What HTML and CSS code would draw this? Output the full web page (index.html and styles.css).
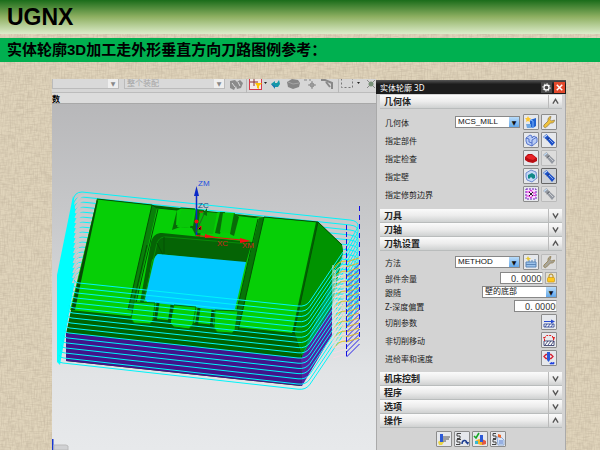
FILE: index.html
```html
<!DOCTYPE html>
<html lang="zh-CN">
<head>
    <meta charset="UTF-8">
    <meta name="viewport" content="width=device-width, initial-scale=1.0">
    <title>UGNX</title>
    <link rel="stylesheet" href="styles.css">
</head>
<body>
    <!-- linen texture behind the slide -->
    <svg class="linen" aria-hidden="true">
        <filter id="weft" x="0" y="0" width="100%" height="100%">
            <feTurbulence type="fractalNoise" baseFrequency="0.12 0.7" numOctaves="2" seed="4"/>
            <feColorMatrix values="0 0 0 0 0.55  0 0 0 0 0.47  0 0 0 0 0.35  1.3 0 0 0 -0.52"/>
        </filter>
        <filter id="warp" x="0" y="0" width="100%" height="100%">
            <feTurbulence type="fractalNoise" baseFrequency="0.7 0.12" numOctaves="2" seed="9"/>
            <feColorMatrix values="0 0 0 0 0.55  0 0 0 0 0.47  0 0 0 0 0.35  1.3 0 0 0 -0.52"/>
        </filter>
        <rect width="100%" height="100%" filter="url(#weft)"/>
        <rect width="100%" height="100%" filter="url(#warp)"/>
    </svg>

    <!-- shared icons -->
    <svg class="sprite" aria-hidden="true">
        <symbol id="torch" viewBox="0 0 14 14">
            <path d="M1 4 4.500 1 7 4l6 5.500-3 3.500-5.500-6.500z" fill="currentColor"/>
            <path d="M2 4.500 5 2" stroke="#c4dcf4" stroke-width="1.200"/>
            <path d="M7.500 4.500 4.500 7" stroke="#222" stroke-opacity=".6" stroke-width=".8"/>
            <path d="M7 6l4 4" stroke="#fff" stroke-opacity=".5"/>
        </symbol>
        <symbol id="wrench" viewBox="0 0 14 14">
            <path d="M9 1.500 8 4.500 9.500 6l3-1c0 2-1.500 3.500-4 3L4.500 12a1.500 1.500 0 0 1-2.500-2l4-4C5.500 3.500 7 1.500 9 1.500z" fill="currentColor" stroke="#8a7440" stroke-width=".7"/>
        </symbol>
        <symbol id="down" viewBox="0 0 8 8"><path d="M1 1.500 4 6.500l3-5" fill="none" stroke="#555" stroke-width="1.500"/></symbol>
        <symbol id="up" viewBox="0 0 8 8"><path d="M1 6.500 4 1.500l3 5" fill="none" stroke="#555" stroke-width="1.500"/></symbol>
    </svg>

    <header class="banner"><h1>UGNX</h1></header>
    <h2 class="subtitle">实体轮廓3D加工走外形垂直方向刀路图例参考：</h2>

    <main class="stage">
        <section class="workspace">
            <div class="toolbar">
                <span class="combo combo-filter"><select aria-label="过滤器" disabled><option></option></select></span>
                <span class="combo combo-scope"><select aria-label="范围" disabled><option>整个装配</option></select></span>
                <svg class="tools" viewBox="230 79 146 14" preserveAspectRatio="xMinYMin slice" aria-hidden="true">
                    <path d="M230 81l5-1 2 2 3-2 3 3-2 5-4 1-1-3-2 4-4-2z" fill="#8b8b8b"/>
                    <path d="M232 83l3 4m3-5 2 4" stroke="#ddd"/>
                    <path d="M246.500 79v14M338.500 79v14" stroke="#b8b8b8"/>
                    <rect x="249.500" y="77.500" width="12" height="12" fill="#f2e8e8" stroke="#d43a4a"/>
                    <path d="M250 82h8m-4-3v7" stroke="#843030"/>
                    <path d="M255 83h7l-3 3v3l-2-1v-2z" fill="#ffc400"/>
                    <path d="M264 82h3l-1.500 2z" fill="#222"/>
                    <path d="M271 84l4-3v2h2l2-3 1 4-2 3h-3v2z" fill="#1598a8"/>
                    <path d="M271 84l4 2v2z" fill="#2266b8"/>
                    <path d="M287 82l5-3 6 1 2 3-1 4-6 2-5-2z" fill="#858585"/>
                    <path d="M288 82l5 2 6-1" stroke="#a5a5a5" fill="none"/>
                    <path d="M304 80h3m3-1v2M308 85h8m-4-4v8" stroke="#888"/>
                    <circle cx="312" cy="85" r="2" fill="none" stroke="#888"/>
                    <path d="M321 80h4l7 3v6m-6-7 4 5" stroke="#888" stroke-width="2" fill="none"/>
                    <rect x="341.500" y="76.500" width="11" height="11" fill="none" stroke="#777" stroke-dasharray="2 2"/>
                    <path d="M357 82h3l-1.500 2z" fill="#222"/>
                    <path d="M367 80l8 8m0-8-8 8" stroke="#888"/><circle cx="371" cy="84" r="2.500" fill="#789078"/>
                </svg>
            </div>
            <div class="cue">数</div>

            <svg class="model" viewBox="52 104 324 346" preserveAspectRatio="xMinYMin slice" role="img" aria-label="刀路">
                <g id="back" class="pass"></g>
                <path d="M73 196 57 275v87l3 3 15-85 1-65z" fill="#00ffff"/>
                <g id="left" class="gap"></g>

                <!-- block -->
                <path d="M97 199 71 310l-5 24v27l234 25 32-52v-28l11-54-1-7-24-23-54-5z" fill="#006400"/>
                <path d="M97 199l55 6 5 3 20 2 4-2 14 1 4 3 17 1 4-1 14 1 4 3 17 2 5-1 56 5-24 111-67-7-155-16z" fill="#06cf06"/>
                <path d="M97 199 71 310h4l23-109z" fill="#064a06"/>
                <path d="M318 222l24 23 1 7-42 106-7-25z" fill="#009300"/>
                <path d="M343 252 301 358l31-51z" fill="#00a050"/>
                <path d="M66 333l235 25 1 28-236-25z" fill="#41148a"/>
                <path d="M301 358l31-51v28l-30 51z" fill="#5520a0"/>

                <!-- channels -->
                <path d="M152 205l5 3-24 103-5-1z" fill="#098009"/>
                <path d="M152 205l-24 105M158 209l-24 102M147 245l-13 55" class="seam"/>
                <path d="M259 218l5-1-26 114-6-1z" fill="#077507"/>
                <path d="M258 219l-26 112M264 217l-26 114" class="seam"/>

                <!-- pocket -->
                <path d="M151 242c2-7 6-9 11-9l90 9-6 21-88-9-6 6-7 40-6 8z" fill="#056405"/>
                <path d="M144 300 157 243c2-5 5-6 9-6l84 7" fill="none" stroke="#088c08"/>
                <path d="M164 237v17M157 243l6 12" class="seam"/>
                <path d="M158 254c-2 1-3 3-4 6l-9 39 2 3 80 9 8-2 11-47z" fill="#00c8ff"/>

                <!-- lugs above the opening -->
                <path d="M177 210 172 230l8-3 12 1 4 8 4 1 4-27-8-1-3 17-17-1z" fill="#086c08"/>
                <path d="M182 208l12 1-4 19-13-1z" fill="#08c808"/>
                <path d="M200 212l17 1-4 21-16-1z" fill="#08b808"/>
                <path d="M220 212l5 0-5 22-5-1z" fill="#086c08"/>
                <path d="M223 213l10 1-3 19-10-1z" fill="#08c808"/>
                <path d="M234 213l5 4-5 19-4-2z" fill="#086c08"/>

                <!-- lugs below the opening -->
                <g fill="#06cf06" stroke="#067006">
                    <path d="M134 302l21 1-2 17-3 4-16-1-3-4z"/>
                    <path d="M174 305l22 2-3 17-4 5-15-2-4-4z"/>
                    <path d="M215 310l23 1-3 19-3 3-15-1-3-4z"/>
                </g>
                <path d="M158 303l-3 19m17-17-3 19m30-16-3 20m17-18-2 20" stroke="#045404" stroke-width="3"/>
                <path d="M97 199l55 6 5 3 20 2 4-2 14 1M264 217l54 5 24 23M318 222l-24 110 8 26" class="seam"/>

                <g id="front" class="pass"></g>

                <!-- approach and retract moves -->
                <g id="entry" class="entry"></g>
                <path d="M346.500 225v132" stroke="#1410e0" stroke-dasharray="5 2"/>
                <path d="M359.500 206v135" stroke="#1410e0" stroke-dasharray="5 4"/>

                <!-- axes -->
                <path d="M196.500 235v-42" stroke="#0a28c8" stroke-width="1.500"/>
                <path d="M194 196l2.500-10 2.500 10z" fill="#0a28c8"/>
                <path d="M196 235.500l50 5" stroke="#f01010"/>
                <path d="M205 234l10 3-10 1zM240 238l11 3-11 2z" fill="#f01010"/>
                <path d="M196 232l9-20" stroke="#226622"/>
                <path d="M207 208l-4 6 4 2z" fill="#087008"/>
                <circle cx="196.500" cy="221.500" r="2" fill="#f01010"/>
                <path d="M198 229l3-3v4M199 212h4" stroke="#f01010"/>
                <text x="198" y="186" fill="#2450e0">ZM</text>
                <text x="198" y="208" fill="#164a80">ZC</text>
                <text x="217" y="246" fill="#d02020">XC</text>
                <text x="242" y="248" fill="#d02020">XM</text>
                <path d="M52.500 439v11" stroke="#1838d0" stroke-width="2"/>
                <path d="M54 445h12l2 1v4H54z" fill="#d0d1d3" stroke="#bbb"/>
            </svg>
        </section>

        <form class="dialog">
            <div class="titlebar">
                <span>实体轮廓 3D</span>
                <button type="button" class="tb gear" aria-label="设置">
                    <svg viewBox="0 0 10 10"><circle cx="5" cy="5" r="2.300" fill="none" stroke="#fff" stroke-width="1.200"/><circle cx="5" cy="5" r="3.400" fill="none" stroke="#fff" stroke-width=".8" stroke-dasharray="1.300 1.300"/></svg>
                </button>
                <button type="button" class="tb close" aria-label="关闭">
                    <svg viewBox="0 0 10 10"><path d="M2.500 2.500l5 5M7.500 2.500l-5 5" stroke="#fff" stroke-width="1.400"/></svg>
                </button>
            </div>

            <button type="button" class="group" aria-expanded="true"><span>几何体</span><svg><use href="#up"/></svg></button>
            <div class="panel panel-geometry">
                <div class="row">
                    <label for="geometry">几何体</label>
                    <span class="combo combo-blue"><select id="geometry"><option>MCS_MILL</option></select></span>
                    <button type="button" class="icon" aria-label="新建几何体">
                        <svg viewBox="0 0 14 14"><path d="M6 5l6-2v8l-3 2-3-1z" fill="#1f62d0"/><path d="M6 5l3 1v7" stroke="#7cb4ff" fill="none"/><path d="M2 9h5v4H3z" fill="#72a8e0"/><path d="M4 1l1 2 2 0-1.500 2L6 7 4 6 2 7l.5-2L1 3h2z" fill="#ffc832"/></svg>
                    </button>
                    <button type="button" class="icon gold" aria-label="编辑几何体"><svg><use href="#wrench"/></svg></button>
                </div>
                <div class="row">
                    <span class="name">指定部件</span>
                    <button type="button" class="icon" aria-label="指定部件">
                        <svg viewBox="0 0 14 14"><path d="M2 5l4-3 2 1v2l2-2 3 2v4l-5 4-5-2-1-3z" fill="#b9ccf4" stroke="#3d5fc4" stroke-width=".8"/><path d="M2 5l3 1v3l3 1V7l5-3M8 10v3" stroke="#3d5fc4" stroke-width=".8" fill="none"/></svg>
                    </button>
                    <button type="button" class="icon blue" aria-label="显示部件"><svg><use href="#torch"/></svg></button>
                </div>
                <div class="row">
                    <span class="name">指定检查</span>
                    <button type="button" class="icon" aria-label="指定检查">
                        <svg viewBox="0 0 14 14"><path d="M1 6l3-3 4 0 5 4v3l-4 2-5-1-3-2z" fill="#b80c12"/><path d="M2 6l3-2 3 0 4 3-3 2-4-1z" fill="#e82428"/></svg>
                    </button>
                    <button type="button" class="icon dim" aria-label="显示检查" disabled><svg><use href="#torch"/></svg></button>
                </div>
                <div class="row">
                    <span class="name">指定壁</span>
                    <button type="button" class="icon" aria-label="指定壁">
                        <svg viewBox="0 0 14 14"><path d="M2 4l5-3 5 2 1 6-5 4-5-2-1-3z" fill="#c5d8f6" stroke="#5576c8" stroke-width=".8"/><path d="M4 6l4-2 3 2v3l-2 1-2-2-2 2-1-1z" fill="#108888"/></svg>
                    </button>
                    <button type="button" class="icon blue active" aria-label="显示壁"><svg><use href="#torch"/></svg></button>
                </div>
                <div class="row">
                    <span class="name">指定修剪边界</span>
                    <button type="button" class="icon" aria-label="指定修剪边界">
                        <svg viewBox="0 0 14 14"><path d="M2 2h10v10H2z" fill="#f5dcfb" stroke="#6a20c0" stroke-dasharray="2 1"/><path d="M2 5h3l2-2 2 3h3M2 9l3 0 2 2 2-3 3 1" stroke="#e028d8" fill="none"/><path d="M5 5l4 4m0-4-4 4" stroke="#222"/></svg>
                    </button>
                    <button type="button" class="icon dim" aria-label="显示修剪边界" disabled><svg><use href="#torch"/></svg></button>
                </div>
            </div>

            <button type="button" class="group" aria-expanded="false"><span>刀具</span><svg><use href="#down"/></svg></button>
            <button type="button" class="group" aria-expanded="false"><span>刀轴</span><svg><use href="#down"/></svg></button>
            <button type="button" class="group" aria-expanded="true"><span>刀轨设置</span><svg><use href="#up"/></svg></button>
            <div class="panel panel-path">
                <div class="row">
                    <label for="method">方法</label>
                    <span class="combo combo-blue"><select id="method"><option>METHOD</option></select></span>
                    <button type="button" class="icon" aria-label="新建方法">
                        <svg viewBox="0 0 14 14"><path d="M2 7h10v5H2z" fill="#9cc2ea" stroke="#5b86b8"/><path d="M2 9.500h10M5 5v2m3-2v2m3-3v3" stroke="#5b86b8"/><path d="M4 1l1 2 2 0-2 2-1 1-1-2-2-1h2z" fill="#e8c838"/></svg>
                    </button>
                    <button type="button" class="icon grey" aria-label="编辑方法" disabled><svg><use href="#wrench"/></svg></button>
                </div>
                <div class="row slim">
                    <label for="stock">部件余量</label>
                    <input class="number" id="stock" type="text" value="0. 00000">
                    <button type="button" class="lock" aria-label="锁定">
                        <svg viewBox="0 0 10 10"><path d="M3 5V3a2 2 0 0 1 4 0v2" fill="none" stroke="#b08a20"/><rect x="1.500" y="4.500" width="7" height="4.500" rx="1" fill="#ffc81e" stroke="#c08c10" stroke-width=".6"/></svg>
                    </button>
                </div>
                <div class="row slim">
                    <label for="follow">跟随</label>
                    <span class="combo combo-blue combo-wide"><select id="follow"><option>壁的底部</option></select></span>
                </div>
                <div class="row slim">
                    <label for="offset">Z-深度偏置</label>
                    <input class="number" id="offset" type="text" value="0. 00000">
                </div>
                <div class="row">
                    <span class="name">切削参数</span>
                    <button type="button" class="icon" aria-label="切削参数">
                        <svg viewBox="0 0 14 14"><path d="M2 9h10v3H2z" fill="#fff" stroke="#223a90" stroke-width=".8"/><path d="M3 12l2-3m1 3 2-3m1 3 2-3" stroke="#223a90" stroke-width=".8"/><path d="M2 6.500h8" stroke="#2448d0"/><path d="M9 4.500l4 2-4 2z" fill="#2448d0"/></svg>
                    </button>
                </div>
                <div class="row">
                    <span class="name">非切削移动</span>
                    <button type="button" class="icon" aria-label="非切削移动">
                        <svg viewBox="0 0 14 14"><path d="M2 8h10v4.500H2z" fill="#fff" stroke="#222a60" stroke-width=".8"/><path d="M3 12l3-4m0 4 3-4m0 4 3-4" stroke="#222a60" stroke-width=".8"/><path d="M2.500 8V4.500l2-2h5l2 2V8" stroke="#e02020" fill="none" stroke-dasharray="2 1"/><path d="M1 4h3l-2 2zM10 4h3l-1 3z" fill="#e02020"/></svg>
                    </button>
                </div>
                <div class="row">
                    <span class="name">进给率和速度</span>
                    <button type="button" class="icon" aria-label="进给率和速度">
                        <svg viewBox="0 0 14 14"><path d="M2 5.500l2-2h5l2 2-2 2H4z" fill="none" stroke="#d82030" stroke-width="1.300"/><path d="M5 1h3v8l-1.500 2L5 9z" fill="#2b59d8"/><path d="M8 12h1l1-1v1h1l1-1v2H8z" fill="#2040e0" stroke="#2040e0" stroke-width=".6"/></svg>
                    </button>
                </div>
            </div>

            <button type="button" class="group" aria-expanded="false"><span>机床控制</span><svg><use href="#down"/></svg></button>
            <button type="button" class="group" aria-expanded="false"><span>程序</span><svg><use href="#down"/></svg></button>
            <button type="button" class="group" aria-expanded="false"><span>选项</span><svg><use href="#down"/></svg></button>
            <button type="button" class="group" aria-expanded="true"><span>操作</span><svg><use href="#up"/></svg></button>
            <div class="actions">
                <button type="button" class="icon" aria-label="生成">
                    <svg viewBox="0 0 14 14"><path d="M1 10c2-2 5-2 6 0l-2 3H2z" fill="#e8d44a"/><path d="M3 2h3v8H3z" fill="#2b59d8"/><path d="M6 5h7M6 7h6M6 9h3" stroke="#555" stroke-width="1.200"/></svg>
                </button>
                <button type="button" class="icon" aria-label="重播">
                    <svg viewBox="0 0 14 14"><path d="M6 1.500H2v2.500h3v2.500H2M6 7.500H2V10h3v2.500H1" stroke="#444" fill="none"/><path d="M7 12c0-4 4-5 5-1" stroke="#1c3c90" fill="none" stroke-width="1.400"/><path d="M10 10h4l-1 3z" fill="#1c3c90"/></svg>
                </button>
                <button type="button" class="icon" aria-label="确认">
                    <svg viewBox="0 0 14 14"><path d="M2 9l4-2 7 2v3l-5 1-6-2z" fill="#f0b428"/><path d="M9 7l4 2v3l-4 1z" fill="#e05848"/><path d="M7 3h3v7H7z" fill="#2b59d8"/><path d="M1 4l2 2 3-5" stroke="#18a828" stroke-width="1.600" fill="none"/><path d="M2 9h3v3H2z" fill="#38b8d0"/></svg>
                </button>
                <button type="button" class="icon" aria-label="列表">
                    <svg viewBox="0 0 14 14"><path d="M5 1.500H2v2.500h3v2.500H2M5 7.500H2V10h3v2.500H1" stroke="#444" fill="none"/><path d="M6 5h4l3 3v5H7z" fill="#d6e6fa" stroke="#7c9cd0" stroke-width=".8"/><path d="M7 2l3 1 0 3-3-1z" fill="#f06828"/><path d="M8 9h4M8 11h4" stroke="#5878c8"/></svg>
                </button>
            </div>
        </form>
    </main>
    <script src="toolpath.js"></script>
</body>
</html>
```

FILE: styles.css
```css
* {
    box-sizing: border-box;
}

body {
    margin: 0;
    min-height: 100vh;
    overflow: hidden;
    display: flex;
    flex-direction: column;
    background-color: #e0d4bb;
    font-family: "Noto Sans", "Noto Sans CJK SC", sans-serif;
    font-size: 8px;
    color: #222;
}

.linen {
    position: absolute;
    width: 100%;
    height: 100%;
    z-index: -1;
}

.sprite {
    position: absolute;
    width: 0;
    height: 0;
}

.banner {
    height: 34px;
    padding: 0 7px;
    display: flex;
    align-items: center;
    background: linear-gradient(#1a6c1a, #8fb062 50%, #dceccb);
}

.banner h1 {
    margin: 0;
    font: bold 23px "Liberation Sans", Arial, sans-serif;
    color: #000;
}

.subtitle {
    margin: 4px 0 17px;
    padding: 0 7px;
    background-color: #00b050;
    color: #000;
    font: bold 15px/24px "Liberation Sans", "Noto Sans CJK SC", sans-serif;
    white-space: nowrap;
}

.stage {
    flex: 1;
    display: flex;
    margin: 0 34px 0 52px;
}

/* workspace */
.workspace {
    flex: 1;
    min-width: 0;
    display: flex;
    flex-direction: column;
    background-color: #d6d6d6;
    overflow: hidden;
}

.toolbar {
    height: 14px;
    display: flex;
    gap: 5px;
    border-bottom: 1px solid #bcbcbc;
}

.toolbar .combo {
    height: 10px;
    background-color: #d9d9d9;
    border: 1px solid #bbb;
    border-top: none;
}

.toolbar .combo::after {
    background-color: #eee;
    color: #888;
}

.toolbar select {
    color: #a5a5a5;
    line-height: 9px;
    opacity: 1;
}

.combo-filter {
    width: 67px;
}

.combo-scope {
    width: 101px;
}

.tools {
    flex: 1;
    min-width: 0;
    height: 14px;
}

.cue {
    height: 11px;
    line-height: 11px;
    font-weight: bold;
    color: #000;
    background-color: #dcdcdc;
    border-bottom: 1px solid #a8a8a8;
}

.model {
    flex: 1;
    width: 100%;
    min-height: 0;
    background: linear-gradient(#b8b8ba, #c6c7c9 30%, #e2e4e6 78%, #e7e9eb);
}

.model text {
    font: 8px "Liberation Sans", Arial, sans-serif;
}

.pass {
    fill: none;
    stroke: #00f4fa;
}

.gap {
    fill: none;
    stroke: #c8cacc;
    stroke-width: 2px;
}

.entry {
    fill: none;
}

.seam {
    fill: none;
    stroke: #045004;
    stroke-width: 1px;
}

/* dialog */
.dialog {
    width: 190px;
    margin: 1px 0 0;
    padding: 0 3px;
    background-color: #d3d3d3;
    border-left: 1px solid #aaa;
    border-right: 1px solid #aaa;
    display: flex;
    flex-direction: column;
}

.titlebar {
    height: 14px;
    margin: 0 -4px 1px;
    padding: 0 1px 0 4px;
    display: flex;
    align-items: center;
    gap: 2px;
    background: linear-gradient(#555, #1c1c1c 30%);
    color: #fff;
}

.titlebar span {
    flex: 1;
}

button {
    margin: 0;
    padding: 0;
    border: none;
    font: inherit;
    color: inherit;
    cursor: pointer;
}

.tb {
    width: 11px;
    height: 11px;
    background-color: #4a4a4a;
}

.tb svg,
.icon svg,
.lock svg {
    display: block;
    width: 100%;
    height: 100%;
}

.close {
    background-color: #e2492c;
}

.group {
    height: 14px;
    display: flex;
    align-items: stretch;
    background: linear-gradient(#fbfbfb, #ececec 50%, #cfd1d1);
    border-bottom: 1px solid #b9bcbc;
    font-size: 9px;
    font-weight: bold;
    line-height: 13px;
    text-align: left;
}

.group span {
    flex: 1;
    padding-left: 4px;
}

.group svg {
    width: 14px;
    height: 13px;
    padding: 3px;
    border-left: 1px solid #bbb;
}

.panel {
    padding: 4px 5px 6px;
}

.panel-path {
    padding: 2px 5px 5px;
}

.row {
    height: 18px;
    display: flex;
    align-items: center;
    gap: 2px;
}

.row.slim {
    height: 14px;
}

.row label,
.row .name {
    flex: 1;
    white-space: nowrap;
}

.combo {
    position: relative;
    display: flex;
    background-color: #fff;
    border: 1px solid #888;
}

.combo::after {
    content: "▼";
    position: absolute;
    top: 0;
    right: 0;
    bottom: 0;
    width: 10px;
    display: flex;
    align-items: center;
    justify-content: center;
    font: 6px "DejaVu Sans", sans-serif;
    pointer-events: none;
}

.combo-blue {
    width: 65px;
    height: 12px;
    margin-right: 1px;
}

.combo-blue::after {
    background: linear-gradient(#b9dcfa, #64a8ea);
    color: #111;
}

.combo-wide {
    width: 75px;
    margin-right: 0;
}

select {
    flex: 1;
    min-width: 0;
    padding: 0 10px 0 2px;
    border: none;
    appearance: none;
    background: none;
    font: 8px/10px "Liberation Sans", "Noto Sans CJK SC", sans-serif;
    color: #111;
}

.number {
    width: 43px;
    height: 12px;
    padding: 0 0 0 10px;
    border: 1px solid #888;
    border-right-color: #ccc;
    background-color: #fff;
    font: inherit;
    font-size: 9px;
    color: #333;
}

.icon {
    width: 16px;
    height: 16px;
    background-color: #e6e8ec;
    border: 1px solid #8c8c8c;
    border-radius: 1px;
}

.icon.active {
    background-color: #ccd0d6;
    border-color: #666;
}

.icon:disabled {
    border-color: #bbb;
    background-color: #dcdcdc;
}

.gold {
    color: #f0c23c;
}

.blue {
    color: #1c50c8;
}

.dim {
    color: #9499a2;
}

.grey {
    color: #a8a59a;
}

.lock {
    width: 12px;
    height: 12px;
    background-color: #e4e0d0;
    border: 1px solid #aaa;
}

.actions {
    height: 22px;
    display: flex;
    justify-content: center;
    align-items: center;
    gap: 2px;
}
```

FILE: toolpath.js
```js
const NS = 'http://www.w3.org/2000/svg';
const step = 5;
const levels = 17;

function addPath(groupId, d, color) {
    const path = document.createElementNS(NS, 'path');
    path.setAttribute('d', d);
    if (color) path.setAttribute('stroke', color);
    document.getElementById(groupId).appendChild(path);
}

for (let i = 0; i < levels; i++) {
    const y = i * step;
    const frontY = i * 5.2;
    // far side of each level, mostly hidden by the block
    addPath('back', `M73 ${201 + y}q1-9 9-9L350 ${220 + y}q9 1 8 7L345 ${250 + y}`);
    addPath('left', `M${76 - i * 0.2} ${203 + y}q2-7 9-8l10 1`);
    // near side
    addPath('front', `M${74 - i} ${280 + y}q1 3 5 3L298 ${306 + frontY}q8 1 12-5L343 ${252 + frontY}`);
}

for (let i = 0; i < levels; i++) {
    const y = i * step;
    addPath('entry', `M346 ${274 + y}L333 ${278 + y}`, '#f4dce6');
    addPath('entry', `M334 ${268 + y}q4-7 12-7`, i % 2 ? '#e8dfa0' : '#e6c31c');
    addPath('entry', `M346 ${262 + y}l13-4`, '#d9b62a');
    addPath('entry', `M346.5 ${277 + y}l13-13`, '#2a22e8');
}
addPath('entry', 'M333 265v82M335 270v78', '#e6e0e4');
```
